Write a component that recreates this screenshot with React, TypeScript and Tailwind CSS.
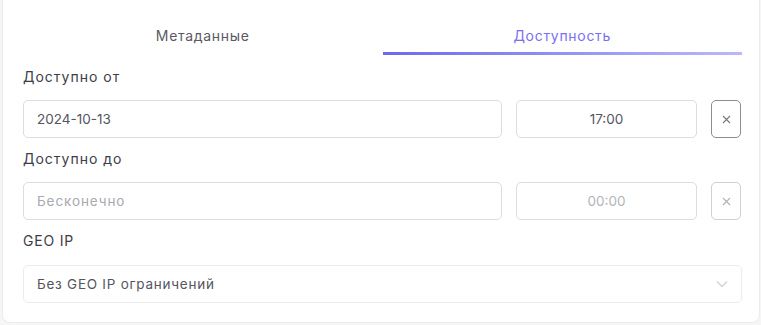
export default function App() {
  return (
    <div className="min-h-screen bg-[#f6f6f7] pl-[2px] pr-[1px] font-['Inter',sans-serif]">
      <div className="bg-white border-x border-b border-[#ececef] rounded-b-lg pt-[26px] pb-[19px] pl-[20px] pr-[17px]">
        <div className="flex">
          <button className="flex-1 flex flex-col items-center">
            <span className="h-5 leading-5 text-[14px] text-[#5a5a63] tracking-[0.7px]">Метаданные</span>
            <span className="mt-[6px] h-[3px] w-full" />
          </button>
          <button className="flex-1 flex flex-col items-center">
            <span className="h-5 leading-5 text-[14px] text-[#7a6ff0] tracking-[0.7px]">Доступность</span>
            <span className="mt-[6px] h-[3px] w-full bg-gradient-to-r from-[#7166ef] to-[#bcb8f9]" />
          </button>
        </div>

        <div className="mt-[12px] h-5 leading-5 text-[14px] text-[#3d3d48] tracking-[1px]">Доступно от</div>
        <div className="mt-[13px] flex gap-[14px] pr-[1px]">
          <div className="flex-1 h-[38px] border border-[#dcdce1] rounded-[5px] flex items-center px-[13px] text-[13.5px] text-[#55555e]">
            2024-10-13
          </div>
          <div className="w-[181px] h-[38px] border border-[#dcdce1] rounded-[5px] flex items-center justify-center text-[13.5px] text-[#55555e]">
            17:00
          </div>
          <button className="w-[30px] h-[38px] border border-[#8c8c92] rounded-[5px] flex items-center justify-center">
            <svg width="9" height="9" viewBox="0 0 9 9" fill="none" stroke="#77777e" strokeWidth="1.1">
              <path d="M1 1L8 8M8 1L1 8" />
            </svg>
          </button>
        </div>

        <div className="mt-[11px] h-5 leading-5 text-[14px] text-[#3d3d48] tracking-[1px]">Доступно до</div>
        <div className="mt-[13px] flex gap-[14px] pr-[1px]">
          <div className="flex-1 h-[38px] border border-[#dcdce1] rounded-[5px] flex items-center px-[13px] text-[13.5px] text-[#a9a9b0] tracking-[0.9px]">
            Бесконечно
          </div>
          <div className="w-[181px] h-[38px] border border-[#dcdce1] rounded-[5px] flex items-center justify-center text-[13.5px] text-[#b3b3ba]">
            00:00
          </div>
          <button className="w-[30px] h-[38px] border border-[#cfcfd4] rounded-[5px] flex items-center justify-center">
            <svg width="9" height="9" viewBox="0 0 9 9" fill="none" stroke="#b0b0b6" strokeWidth="1.1">
              <path d="M1 1L8 8M8 1L1 8" />
            </svg>
          </button>
        </div>

        <div className="mt-[11px] h-5 leading-5 text-[14px] text-[#3d3d48] tracking-[0.8px]">GEO IP</div>
        <div className="mt-[14px] h-[38px] border border-[#ececef] rounded-[5px] flex items-center justify-between pl-[13px] pr-[13px] text-[13.5px] text-[#55555e]">
          <span className="tracking-[0.75px]">Без GEO IP ограничений</span>
          <svg width="12" height="8" viewBox="0 0 12 8" fill="none" stroke="#d4d4d8" strokeWidth="1.5">
            <path d="M1 1.5L6 6.5L11 1.5" />
          </svg>
        </div>
      </div>
    </div>
  )
}
